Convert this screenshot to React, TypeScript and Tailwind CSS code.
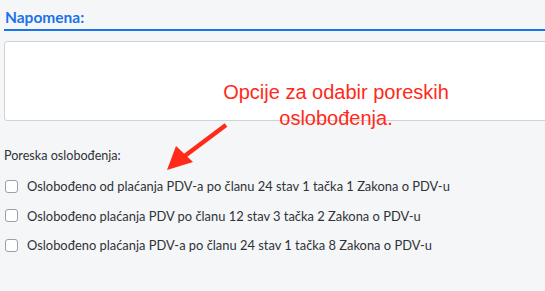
import React from 'react';

const options = [
  'Oslobođeno od plaćanja PDV-a po članu 24 stav 1 tačka 1 Zakona o PDV-u',
  'Oslobođeno plaćanja PDV po članu 12 stav 3 tačka 2 Zakona o PDV-u',
  'Oslobođeno plaćanja PDV-a po članu 24 stav 1 tačka 8 Zakona o PDV-u',
];

export default function App() {
  return (
    <div className="relative w-[545px] h-[291px] overflow-hidden bg-[#f5f6f8] font-['Lato',sans-serif]">
      <div className="pl-1 pt-[8px]">
        <div className="border-b-2 border-[#1a73e8] pb-[3px] pl-[1px]">
          <h2 className="text-[15.5px] leading-[18px] font-bold text-[#1a73e8]">Napomena:</h2>
        </div>
        <textarea className="mt-[10px] block w-[560px] h-[80px] bg-white border border-[#cfd2d6] rounded-[3px] resize-none outline-none" />

        <div className="mt-[27px] text-[12.6px] leading-[16px] text-[#2f3337]">Poreska oslobođenja:</div>

        <div className="mt-[14px] flex flex-col gap-[13.5px]">
          {options.map((o) => (
            <label key={o} className="flex items-center gap-[9px] text-[12.9px] leading-[16px] text-[#2f3337]">
              <span className="ml-[1px] w-[13px] h-[13px] rounded-[3px] border border-[#9aa0a6] bg-white shrink-0" />
              {o}
            </label>
          ))}
        </div>
      </div>

      {/* annotation */}
      <div className="absolute left-[186px] top-[79px] w-[300px] text-center text-[20px] leading-[26px] text-[#ff2a1a] font-['Liberation_Sans',sans-serif]">
        Opcije za odabir poreskih
        <br />
        oslobođenja.
      </div>
      <svg className="absolute left-0 top-0" width="545" height="291" viewBox="0 0 545 291">
        <line x1="226" y1="125" x2="182" y2="158" stroke="#ff2a1a" strokeWidth="4.5" />
        <polygon points="167,170 176,146 193,162" fill="#ff2a1a" />
      </svg>
    </div>
  );
}
